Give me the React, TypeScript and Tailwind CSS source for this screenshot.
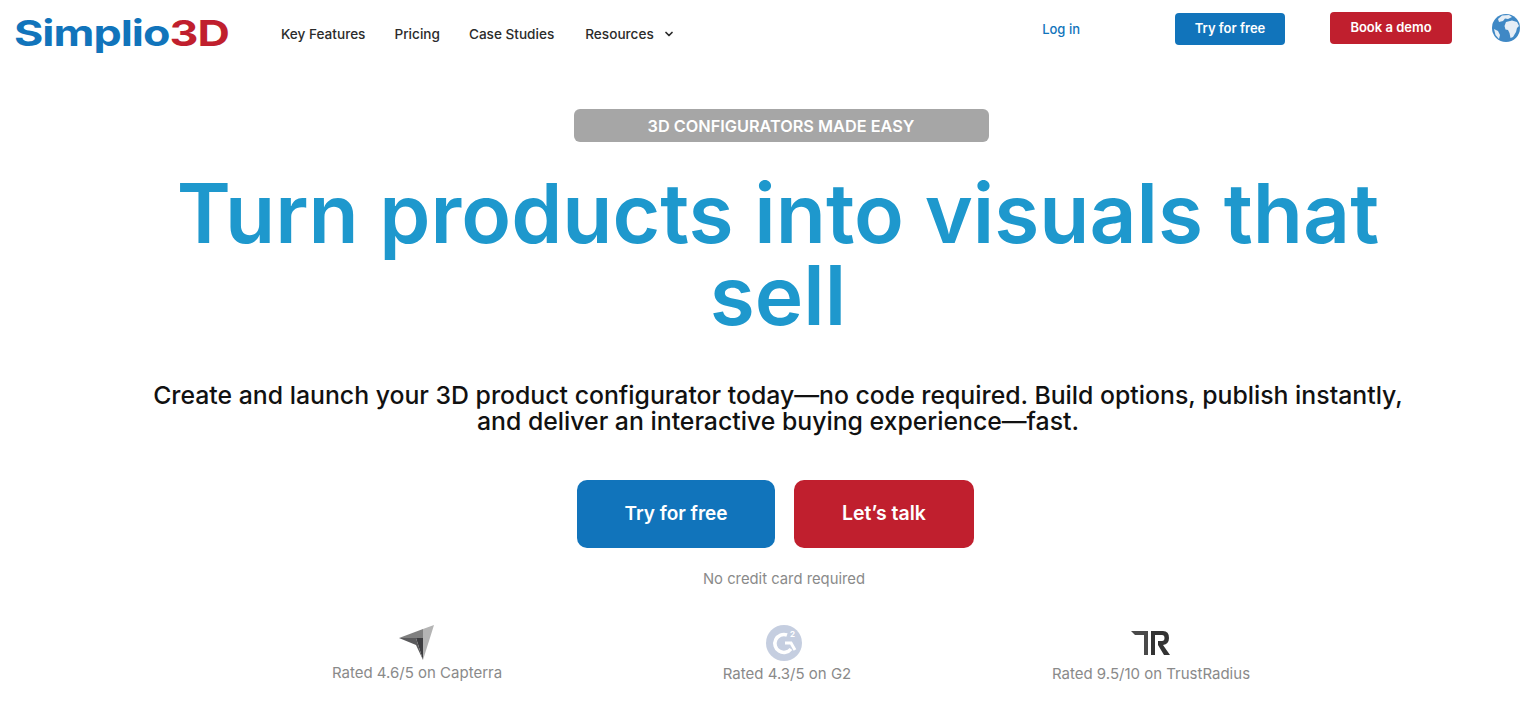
import { ChevronDown } from 'lucide-react'

const FONT = "font-['Inter','Noto_Sans',sans-serif]"

const navLinks = ['Key Features', 'Pricing', 'Case Studies']

function Globe() {
  return (
    <svg viewBox="0 0 28 28" className="h-7 w-7">
      <circle cx="14" cy="14" r="14" fill="#3f88c5" />
      <path d="M10 1.5 L17 1 L20 3 L16 5 L13 4.5 L11 7 L7 8 L6 5 Z" fill="#e6eef6" />
      <path d="M14 8 L20 6.5 L25 8 L27 12 L25 14 L24 18 L21 23 L18.5 24 L17.5 19 L16 16 L13.5 15.5 L12.5 12 Z" fill="#e6eef6" />
      <path d="M2 15 L6 17 L8 21 L7 25 L3.5 21 Z" fill="#e6eef6" />
    </svg>
  )
}

function CapterraIcon() {
  return (
    <svg viewBox="0 0 36 36" className="h-[36px] w-[36px]">
      <path d="M0 13 L24 4 L24 13 L17 13 Z" fill="#808080" />
      <path d="M24 4 L35 0 L24 35 Z" fill="#b4b4b4" />
      <path d="M17 13 L24 13 L24 35 Z" fill="#3d3d40" />
      <path d="M0 13 L17 13 L24 35 L17 20 Z" fill="#5a5a5c" />
    </svg>
  )
}

function G2Icon() {
  return (
    <svg viewBox="0 0 36 36" className="mr-[6px] h-[36px] w-[36px]">
      <circle cx="18" cy="18" r="18" fill="#c5cee0" />
      <path d="M21 10 A9 9 0 1 0 25 24" fill="none" stroke="#fff" strokeWidth="3.6" />
      <path d="M19 18 L25 18 L29 25" fill="none" stroke="#fff" strokeWidth="3" />
      <text x="24" y="12" fontSize="8" fontWeight="700" fill="#fff" className="font-['Inter',sans-serif]">2</text>
    </svg>
  )
}

function TrustRadiusIcon() {
  return (
    <svg viewBox="0 0 40 26" className="h-[26px] w-[40px]">
      <path d="M0 1 L17 1 L17 25 L13 25 L13 5 L4 5 Z" fill="#4a4a4a" />
      <path d="M20 1 L32 1 Q38 1 38 8 Q38 14 32 15 L39 25 L33 25 L27 15 L27 11 L31 11 Q33.500 11 33.500 8 Q33.500 5 31 5 L24 5 L24 25 L20 25 Z" fill="#333" />
    </svg>
  )
}

function Rating({ icon, label, className }: { icon: React.ReactNode; label: string; className: string }) {
  return (
    <div className={`flex flex-col items-center ${className}`}>
      {icon}
      <p className="text-[15px] leading-5 whitespace-nowrap text-[#8a8a8a]">{label}</p>
    </div>
  )
}

export default function App() {
  return (
    <div className={`h-[709px] overflow-hidden bg-white ${FONT}`}>
      {/* Header */}
      <header className="flex h-[60px] items-start pr-[16px] pl-[14px]">
        <div className="mt-[13px] w-[267px]">
          <span className="inline-block origin-left scale-x-[1.245] text-[36px] leading-[40px] font-bold tracking-[-0.8px] whitespace-nowrap">
            <span className="text-[#1174bb]">Simplio</span>
            <span className="text-[#c01f2e]">3D</span>
          </span>
        </div>
        <nav className="mt-[25px] flex items-center gap-[29px] text-[13.6px] leading-[18px] font-medium text-[#2b2b2b]">
          {navLinks.map((link) => (
            <a key={link}>{link}</a>
          ))}
          <a className="ml-[2px] flex items-center gap-[9px]">
            Resources
            <ChevronDown className="h-[12px] w-[12px]" strokeWidth={3.5} />
          </a>
        </nav>
        <div className="mt-[12px] ml-auto flex items-start">
          <a className="mt-[8px] mr-[95px] text-[13px] leading-[18px] font-medium text-[#1174bb]">Log in</a>
          <a className="mt-[1px] mr-[45px] flex h-[32px] w-[110px] items-center justify-center rounded-[4px] bg-[#1174bb] text-[13px] font-semibold text-white">
            Try for free
          </a>
          <a className="mr-[40px] flex h-[32px] w-[122px] items-center justify-center rounded-[4px] bg-[#c01f2e] text-[13px] font-semibold text-white">
            Book a demo
          </a>
          <div className="mt-[2px]">
            <Globe />
          </div>
        </div>
      </header>

      {/* Hero */}
      <main className="flex flex-col items-center pt-[49px] pl-[26px]">
        <div className="flex h-[33px] w-[415px] items-center justify-center rounded-[6px] bg-[#a6a6a6] pt-[2px] text-[16.3px] font-semibold text-white">
          3D CONFIGURATORS MADE EASY
        </div>
        <h1 className="mt-[31px] mr-[6px] w-[1300px] text-center text-[82px] leading-[82px] font-semibold text-[#1e98cd]">
          Turn products into visuals that sell
        </h1>
        <p className="mt-[45px] mr-[6px] w-[1270px] text-center text-[24.8px] leading-[26px] font-medium text-[#111]">
          Create and launch your 3D product configurator today—no code required. Build options, publish instantly, and deliver an interactive buying experience—fast.
        </p>
        <div className="mt-[46px] mr-[11px] flex gap-[19px]">
          <a className="flex h-[68px] w-[198px] items-center justify-center rounded-[10px] bg-[#1174bb] text-[19px] font-semibold text-white">
            Try for free
          </a>
          <a className="flex h-[68px] w-[180px] items-center justify-center rounded-[10px] bg-[#c01f2e] text-[19.500px] font-semibold text-white">
            Let’s talk
          </a>
        </div>
        <p className="mt-[21px] ml-[6px] text-[14.8px] leading-5 text-[#8a8a8a]">No credit card required</p>
      </main>

      {/* Ratings */}
      <section className="mt-[36px] flex items-start pl-[332px]">
        <Rating icon={<CapterraIcon />} label="Rated 4.6/5 on Capterra" className="w-[170px] [&>p]:mt-[2px]" />
        <Rating icon={<G2Icon />} label="Rated 4.3/5 on G2" className="ml-[222px] w-[126px] [&>p]:mt-[3px]" />
        <Rating icon={<TrustRadiusIcon />} label="Rated 9.5/10 on TrustRadius" className="ml-[201px] w-[200px] pt-[5px] [&>p]:mt-[8px]" />
      </section>
    </div>
  )
}
